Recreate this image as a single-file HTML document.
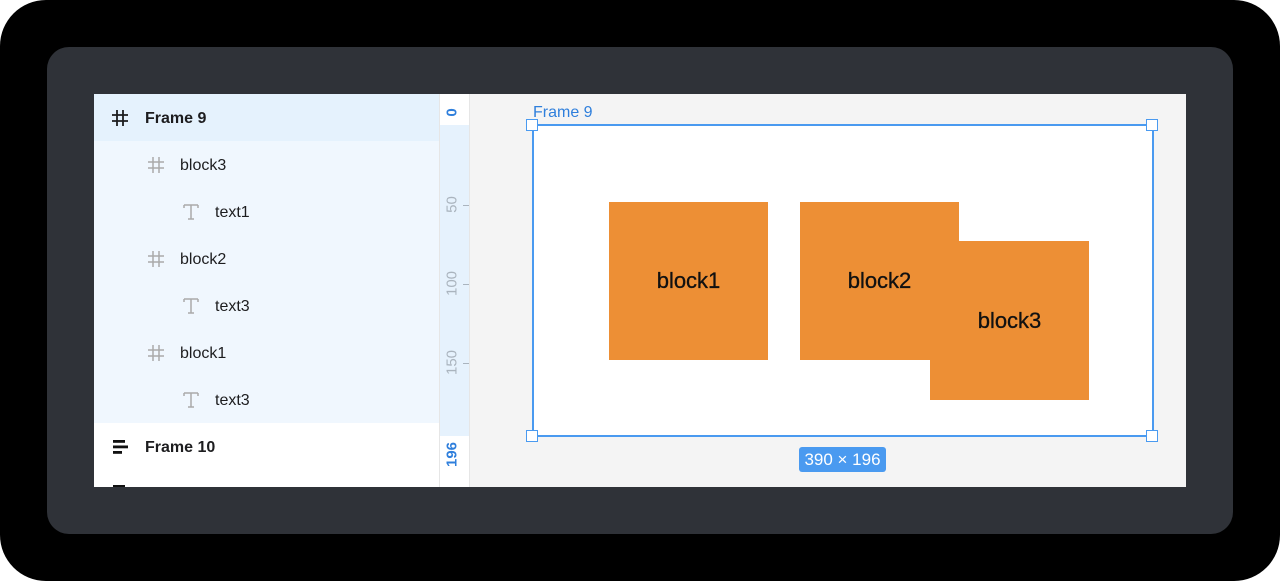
<!DOCTYPE html>
<html><head><meta charset="utf-8"><style>
*{margin:0;padding:0;box-sizing:border-box}
body{width:1280px;height:581px;background:#fff;overflow:hidden;font-family:"Liberation Sans",sans-serif}
.outer{position:absolute;left:0;top:0;width:1280px;height:581px;background:#000;border-radius:46px}
.panel{position:absolute;left:47px;top:47px;width:1186px;height:487px;background:#2f3238;border-radius:22px}
.content{position:absolute;left:94px;top:94px;width:1092px;height:393px;background:#f4f4f4;overflow:hidden}
.left{position:absolute;left:0;top:0;width:345px;height:393px;background:#fff}
.row{position:absolute;left:0;width:345px;height:47px;font-size:16px;color:#1d1d1f}
.row span{position:absolute;top:16px}
.row svg{position:absolute;top:15px}
.ruler{position:absolute;left:345px;top:0;width:31px;height:393px;background:#fff;border-left:1px solid #e6e6e6;border-right:1px solid #e6e6e6}
.rl{position:absolute;left:-3px;width:30px;transform:rotate(-90deg);text-align:center;font-size:15px}
.blk{position:absolute;background:#ed8f35;font-size:22px;color:#111;display:flex;align-items:center;justify-content:center;-webkit-text-stroke:0.3px #111}
.h{position:absolute;width:12px;height:12px;background:#fff;border:1.5px solid #4a9af0}
</style></head><body>
<div class="outer"></div>
<div class="panel"></div>
<div class="content">
 <div class="left">
  <div class="row" style="top:0;background:#e5f2fd"><svg style="left:17px" width="18" height="18" viewBox="0 0 18 18" stroke="#1d1d1f" stroke-width="1.8" fill="none"><path d="M6 1v16M12 1v16M1 6h16M1 12h16"/></svg><span style="left:51px;font-weight:bold">Frame 9</span></div>
  <div style="position:absolute;top:47px;left:0;width:345px;height:282px;background:#f0f7fe"></div>
  <div class="row" style="top:47px"><svg style="left:53px" width="18" height="18" viewBox="0 0 18 18" stroke="#aaa" stroke-width="1.5" fill="none"><path d="M6 1v16M12 1v16M1 6h16M1 12h16"/></svg><span style="left:86px">block3</span></div>
  <div class="row" style="top:94px"><svg style="left:88px" width="18" height="18" viewBox="0 0 18 18" stroke="#aaa" stroke-width="1.5" fill="none"><path d="M2 2h14M2 2v3M16 2v3M9 2v14M6 16h6"/></svg><span style="left:121px">text1</span></div>
  <div class="row" style="top:141px"><svg style="left:53px" width="18" height="18" viewBox="0 0 18 18" stroke="#aaa" stroke-width="1.5" fill="none"><path d="M6 1v16M12 1v16M1 6h16M1 12h16"/></svg><span style="left:86px">block2</span></div>
  <div class="row" style="top:188px"><svg style="left:88px" width="18" height="18" viewBox="0 0 18 18" stroke="#aaa" stroke-width="1.5" fill="none"><path d="M2 2h14M2 2v3M16 2v3M9 2v14M6 16h6"/></svg><span style="left:121px">text3</span></div>
  <div class="row" style="top:235px"><svg style="left:53px" width="18" height="18" viewBox="0 0 18 18" stroke="#aaa" stroke-width="1.5" fill="none"><path d="M6 1v16M12 1v16M1 6h16M1 12h16"/></svg><span style="left:86px">block1</span></div>
  <div class="row" style="top:282px"><svg style="left:88px" width="18" height="18" viewBox="0 0 18 18" stroke="#aaa" stroke-width="1.5" fill="none"><path d="M2 2h14M2 2v3M16 2v3M9 2v14M6 16h6"/></svg><span style="left:121px">text3</span></div>
  <div class="row" style="top:329px"><svg style="left:18px" width="18" height="18" viewBox="0 0 18 18" fill="#111"><rect x="1" y="2" width="12" height="2.8"/><rect x="1" y="7.5" width="15" height="2.8"/><rect x="1" y="13" width="9" height="2.8"/></svg><span style="left:51px;font-weight:bold">Frame 10</span></div>
  <div style="position:absolute;left:19px;top:391px;width:12px;height:3px;background:#111"></div>
 </div>
 <div class="ruler">
  <div style="position:absolute;left:0;top:31px;width:29px;height:311px;background:#e6f2fd"></div>
  <div class="rl" style="top:10px;color:#2f7fdc;font-weight:bold">0</div>
  <div class="rl" style="top:102px;color:#aab4be">50</div>
  <div class="rl" style="top:181px;color:#aab4be">100</div>
  <div class="rl" style="top:260px;color:#aab4be">150</div>
  <div class="rl" style="top:352px;color:#2f7fdc;font-weight:bold">196</div>
  <div style="position:absolute;left:23px;top:111px;width:6px;height:1px;background:#aab4be"></div>
  <div style="position:absolute;left:23px;top:190px;width:6px;height:1px;background:#aab4be"></div>
  <div style="position:absolute;left:23px;top:269px;width:6px;height:1px;background:#aab4be"></div>
 </div>
 <div style="position:absolute;left:439px;top:10px;font-size:16px;color:#2f7fdc">Frame 9</div>
 <div style="position:absolute;left:438px;top:30px;width:622px;height:313px;background:#fff;border:2px solid #4a9af0"></div>
 <div class="blk" style="left:515px;top:108px;width:159px;height:158px">block1</div>
 <div class="blk" style="left:706px;top:108px;width:159px;height:158px">block2</div>
 <div class="blk" style="left:836px;top:147px;width:159px;height:159px">block3</div>
 <div class="h" style="left:432px;top:25px"></div>
 <div class="h" style="left:1052px;top:25px"></div>
 <div class="h" style="left:432px;top:336px"></div>
 <div class="h" style="left:1052px;top:336px"></div>
 <div style="position:absolute;left:705px;top:353px;width:87px;height:25px;background:#4a9af0;border-radius:3px;color:#fff;font-size:17px;text-align:center;line-height:25px">390 × 196</div>
</div>
</body></html>
